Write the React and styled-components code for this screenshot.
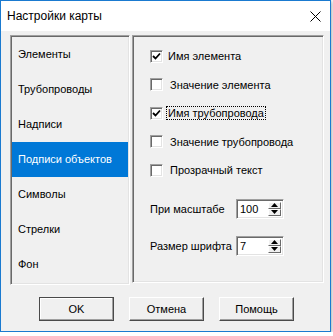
import React from "react";
import styled, { createGlobalStyle } from "styled-components";

const Global = createGlobalStyle`
  html, body { margin: 0; padding: 0; background: #ffffff; }
  body { font-family: "Liberation Sans", Arial, sans-serif; font-size: 11px; color: #000; }
  * { box-sizing: border-box; }
`;

const Window = styled.div`
  width: 331px;
  height: 332px;
  border: 1px solid #1a7ad0;
  display: flex;
  flex-direction: column;
  box-shadow: 1px 1px 4px rgba(0, 0, 0, 0.35);
  background: #f0f0f0;
`;

const TitleBar = styled.div`
  height: 30px;
  background: #ffffff;
  display: flex;
  align-items: center;
  justify-content: space-between;
  padding: 0 9px 0 6px;
  font-family: "Liberation Sans", Arial, sans-serif;
  font-size: 12px;
  color: #000;
`;

const Client = styled.div`
  flex: 1;
  display: flex;
  flex-direction: column;
  padding: 4px 0 0 9px;
`;

const Top = styled.div`
  display: flex;
  gap: 2px;
  align-items: flex-start;
`;

const Sunken = styled.div`
  border: 1px solid;
  border-color: #a0a0a0 #ffffff #ffffff #a0a0a0;
  box-shadow: inset 1px 1px 0 #696969, inset -1px -1px 0 #e3e3e3;
  padding: 1px;
`;

const List = styled(Sunken)`
  width: 120px;
  height: 250px;
`;

const Item = styled.div`
  height: 35px;
  line-height: 35px;
  padding-left: 6px;
  background: ${(p) => (p.$active ? "#0078d7" : "transparent")};
  color: ${(p) => (p.$active ? "#ffffff" : "#000000")};
  white-space: nowrap;
`;

const Group = styled(Sunken)`
  width: 192px;
  height: 248px;
  padding: 6px 0 0 17px;
  display: flex;
  flex-direction: column;
`;

const CheckRow = styled.div`
  height: 28.5px;
  display: flex;
  align-items: center;
  gap: ${(p) => (p.$tight ? "4px" : "6px")};
`;

const Box = styled.div`
  width: 13px;
  height: 13px;
  background: #ffffff;
  border: 1px solid;
  border-color: #a0a0a0 #ffffff #ffffff #a0a0a0;
  box-shadow: inset 1px 1px 0 #696969, inset -1px -1px 0 #e3e3e3;
  display: flex;
  align-items: center;
  justify-content: center;
  flex: none;
`;

const Label = styled.span`
  white-space: nowrap;
  padding: 0 1px;
  outline: ${(p) => (p.$focus ? "1px dotted #000" : "none")};
  line-height: 12px;
`;

const SpinRow = styled.div`
  display: flex;
  align-items: center;
  margin-top: ${(p) => p.$mt}px;
  height: 20px;
`;

const SpinLabel = styled.span`
  width: ${(p) => p.$w}px;
  white-space: nowrap;
`;

const Spin = styled.div`
  width: 48px;
  height: 20px;
  background: #ffffff;
  border: 1px solid;
  border-color: #a0a0a0 #ffffff #ffffff #a0a0a0;
  box-shadow: inset 1px 1px 0 #696969, inset -1px -1px 0 #e3e3e3;
  display: flex;
  padding: 2px;
`;

const SpinValue = styled.div`
  flex: 1;
  padding-left: 1px;
  line-height: 14px;
`;

const SpinButtons = styled.div`
  width: 13px;
  display: flex;
  flex-direction: column;
`;

const SpinBtn = styled.div`
  flex: 1;
  background: #f0f0f0;
  border: 1px solid;
  border-color: #ffffff #696969 #696969 #ffffff;
  display: flex;
  align-items: center;
  justify-content: center;
`;

const Buttons = styled.div`
  display: flex;
  gap: 15px;
  margin: 12px 0 0 29px;
`;

const Button = styled.div`
  width: 75px;
  height: 24px;
  border: 1px solid;
  border-color: ${(p) => (p.$default ? "#4a4a4a" : "#ffffff #4a4a4a #4a4a4a #ffffff")};
  box-shadow: inset -1px -1px 0 #a0a0a0${(p) => (p.$default ? ", inset 1px 1px 0 #ffffff" : "")};
  display: flex;
  align-items: center;
  justify-content: center;
  background: #f0f0f0;
`;

const Check = () => (
  <svg width="9" height="9" viewBox="0 0 9 9">
    <path d="M1 4 L3.5 6.5 L8 1.5" fill="none" stroke="#000" strokeWidth="1.8" />
  </svg>
);

const Tri = ({ up }) => (
  <svg width="7" height="4" viewBox="0 0 7 4">
    <path d={up ? "M0 4 L3.5 0 L7 4 Z" : "M0 0 L3.5 4 L7 0 Z"} fill="#000" />
  </svg>
);

const items = [
  "Элементы",
  "Трубопроводы",
  "Надписи",
  "Подписи объектов",
  "Символы",
  "Стрелки",
  "Фон",
];

const checks = [
  { text: "Имя элемента", on: true },
  { text: "Значение элемента", on: false },
  { text: "Имя трубопровода", on: true, focus: true },
  { text: "Значение трубопровода", on: false },
  { text: "Прозрачный текст", on: false },
];

export default function App() {
  return (
    <>
      <Global />
      <Window>
        <TitleBar>
          <span>Настройки карты</span>
          <svg width="11" height="11" viewBox="0 0 11 11">
            <path d="M0.5 0.5 L10.5 10.5 M10.5 0.5 L0.5 10.5" stroke="#000" strokeWidth="1" />
          </svg>
        </TitleBar>
        <Client>
          <Top>
            <List>
              {items.map((t, i) => (
                <Item key={t} $active={i === 3}>
                  {t}
                </Item>
              ))}
            </List>
            <Group>
              {checks.map((c) => (
                <CheckRow key={c.text} $tight={c.on}>
                  <Box>{c.on && <Check />}</Box>
                  <Label $focus={c.focus}>{c.text}</Label>
                </CheckRow>
              ))}
              <SpinRow $mt={14}>
                <SpinLabel $w={86}>При масштабе</SpinLabel>
                <Spin>
                  <SpinValue>100</SpinValue>
                  <SpinButtons>
                    <SpinBtn><Tri up /></SpinBtn>
                    <SpinBtn><Tri /></SpinBtn>
                  </SpinButtons>
                </Spin>
              </SpinRow>
              <SpinRow $mt={17}>
                <SpinLabel $w={86}>Размер шрифта</SpinLabel>
                <Spin>
                  <SpinValue>7</SpinValue>
                  <SpinButtons>
                    <SpinBtn><Tri up /></SpinBtn>
                    <SpinBtn><Tri /></SpinBtn>
                  </SpinButtons>
                </Spin>
              </SpinRow>
            </Group>
          </Top>
          <Buttons>
            <Button $default>OK</Button>
            <Button>Отмена</Button>
            <Button>Помощь</Button>
          </Buttons>
        </Client>
      </Window>
    </>
  );
}
